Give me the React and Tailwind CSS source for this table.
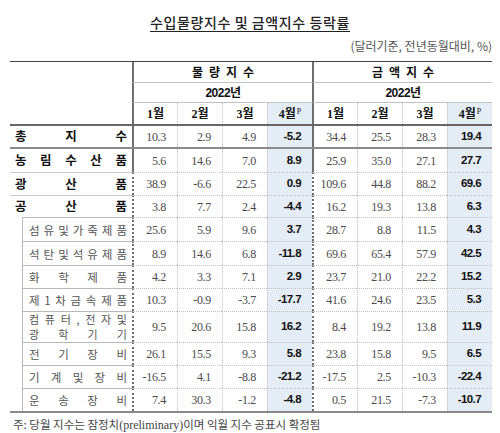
import React from 'react';

const rows = [
  { label: '총지수', main: true, h: 'h-[23px]', v: ['10.3', '2.9', '4.9', '-5.2', '34.4', '25.5', '28.3', '19.4'] },
  { label: '농림수산품', main: true, h: 'h-[23px]', v: ['5.6', '14.6', '7.0', '8.9', '25.9', '35.0', '27.1', '27.7'] },
  { label: '광산품', main: true, h: 'h-[23px]', v: ['38.9', '-6.6', '22.5', '0.9', '109.6', '44.8', '88.2', '69.6'] },
  { label: '공산품', main: true, h: 'h-[22px]', v: ['3.8', '7.7', '2.4', '-4.4', '16.2', '19.3', '13.8', '6.3'] },
  { label: '섬유및가죽제품', h: 'h-[24px]', v: ['25.6', '5.9', '9.6', '3.7', '28.7', '8.8', '11.5', '4.3'] },
  { label: '석탄및석유제품', h: 'h-[24px]', v: ['8.9', '14.6', '6.8', '-11.8', '69.6', '65.4', '57.9', '42.5'] },
  { label: '화학제품', h: 'h-[23px]', v: ['4.2', '3.3', '7.1', '2.9', '23.7', '21.0', '22.2', '15.2'] },
  { label: '제1차금속제품', h: 'h-[23px]', v: ['10.3', '-0.9', '-3.7', '-17.7', '41.6', '24.6', '23.5', '5.3'] },
  { label: '컴퓨터,전자및', label2: '광학기기', h: 'h-[31px]', v: ['9.5', '20.6', '15.8', '16.2', '8.4', '19.2', '13.8', '11.9'] },
  { label: '전기장비', h: 'h-[23px]', v: ['26.1', '15.5', '9.3', '5.8', '23.8', '15.8', '9.5', '6.5'] },
  { label: '기계및장비', h: 'h-[23px]', v: ['-16.5', '4.1', '-8.8', '-21.2', '-17.5', '2.5', '-10.3', '-22.4'] },
  { label: '운송장비', h: 'h-[23px]', v: ['7.4', '30.3', '-1.2', '-4.8', '0.5', '21.5', '-7.3', '-10.7'] },
];

const Spread = ({ text, className = '' }) => (
  <div className={`flex justify-between ${className}`}>
    {[...text].map((c, i) => (
      <span key={i}>{c}</span>
    ))}
  </div>
);

// left border of each value column: dark at the two group edges, dotted otherwise
const colBorder = (i) =>
  i === 0 || i === 4 ? 'border-l-2 border-l-[#6e6e6e]' : 'border-l border-dotted border-l-[#c2c2c2]';

const Month = ({ m, p }) => (
  <span>
    {m}월{p && <sup className="text-[8px] font-normal ml-px">P</sup>}
  </span>
);

const App = () => {
  return (
    <div className="w-[500px] h-[433px] bg-white font-['Noto_Sans_CJK_KR',sans-serif] text-[#222] overflow-hidden">
      {/* Title */}
      <div className="h-[40px] flex items-end justify-center pb-[11px]">
        <h1 className="text-[14px] font-medium tracking-[0.6px] underline underline-offset-[3px] decoration-1 leading-none">
          수입물량지수 및 금액지수 등락률
        </h1>
      </div>
      <div className="h-[21px] flex items-start justify-end pr-[8px] text-[12px] text-[#555] leading-none">
        (달러기준, 전년동월대비, %)
      </div>

      <div className="mx-[10px] w-[482px] border-t border-[#444] border-b-2 border-b-[#8a8a8a]">
        {/* Header */}
        <div className="grid grid-cols-[122px_repeat(8,45px)] grid-rows-[21px_20px_21px] border-b-2 border-[#666] font-bold text-[12px] text-[#111]">
          <div className="row-span-3" />
          <div className="col-span-4 border-l-2 border-l-[#6e6e6e] border-b border-[#c2c2c2] flex items-center justify-center tracking-[6px] pl-[6px]">
            물량지수
          </div>
          <div className="col-span-4 border-l-2 border-l-[#6e6e6e] border-b border-[#c2c2c2] flex items-center justify-center tracking-[6px] pl-[6px]">
            금액지수
          </div>
          <div className="col-span-4 border-l-2 border-l-[#6e6e6e] border-b border-[#c2c2c2] flex items-center justify-center font-['Liberation_Sans','Noto_Sans_CJK_KR',sans-serif] font-semibold tracking-[-0.5px]">
            2022년
          </div>
          <div className="col-span-4 border-l-2 border-l-[#6e6e6e] border-b border-[#c2c2c2] flex items-center justify-center font-['Liberation_Sans','Noto_Sans_CJK_KR',sans-serif] font-semibold tracking-[-0.5px]">
            2022년
          </div>
          {[1, 2, 3, 4, 1, 2, 3, 4].map((m, i) => (
            <div
              key={i}
              className={`${colBorder(i)} flex items-center justify-center font-['Liberation_Serif','Noto_Sans_CJK_KR',serif] ${
                m === 4 ? 'bg-[#e4ecf6]' : ''
              }`}
            >
              <Month m={m} p={m === 4} />
            </div>
          ))}
        </div>

        {/* Body */}
        {rows.map((r, ri) => (
          <div
            key={ri}
            className={`grid grid-cols-[122px_repeat(8,45px)] ${r.h} ${ri === 0 ? 'border-b-2 border-[#8a8a8a]' : ''}`}
          >
            {r.main ? (
              <div
                className={`px-[5px] flex items-center text-[12.5px] font-bold text-[#111] ${
                  ri > 1 ? 'border-t border-[#c8c8c8]' : ''
                }`}
              >
                <Spread text={r.label} className="w-full" />
              </div>
            ) : (
              <div className="pl-[12px] flex">
                <div
                  className={`flex-1 border-l border-t border-[#b8b8b8] pl-[6px] pr-[5px] flex flex-col justify-center text-[#555] ${
                    r.label2 ? 'text-[11px] leading-[15px]' : 'text-[11.5px] leading-[14px]'
                  }`}
                >
                  <Spread text={r.label} />
                  {r.label2 && <Spread text={r.label2} />}
                </div>
              </div>
            )}
            {r.v.map((v, i) => {
              const hl = i === 3 || i === 7;
              return (
                <div
                  key={i}
                  className={`${colBorder(i)} ${
                    ri > 1 ? 'border-t border-dotted border-t-[#c2c2c2]' : ''
                  } flex items-center justify-end pr-[11px] ${
                    hl
                      ? "bg-[#e4ecf6] font-['Liberation_Sans',sans-serif] font-bold text-[11.5px] tracking-[-0.6px] text-[#111]"
                      : "font-['Liberation_Serif',serif] text-[12px] tracking-[-0.3px] text-[#4a4a4a]"
                  }`}
                >
                  {v}
                </div>
              );
            })}
          </div>
        ))}
      </div>

      <div className="pl-[13px] pt-[4px] text-[11.5px] text-[#444] leading-[14px]">
        주: 당월 지수는 잠정치<span className="font-['Liberation_Serif',serif] text-[12px]">(preliminary)</span>이며 익월 지수 공표시 확정됨
      </div>
    </div>
  );
};

export default App;
